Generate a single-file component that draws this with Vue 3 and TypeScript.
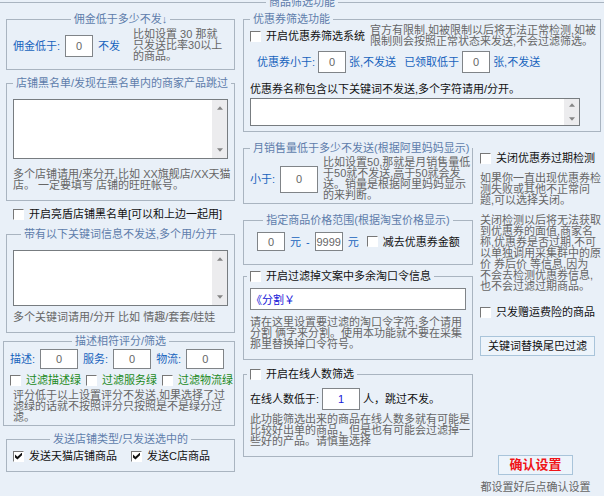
<script setup lang="ts">
import { reactive } from 'vue'

interface ScoreRule {
  key: string
  label: string
  filter: string
  value: string
  green: boolean
}

const form = reactive({
  commission: '0',
  shopBlacklist: '',
  useSharedBlacklist: false,
  keywords: '',
  sendTmall: true,
  sendCShop: true,
  couponEnabled: false,
  couponLeft: '0',
  couponTaken: '0',
  couponKeywords: '',
  monthlySales: '0',
  priceMin: '0',
  priceMax: '9999',
  subtractCoupon: false,
  filterTokens: false,
  tokens: '《分割￥',
  filterOnline: false,
  online: '1',
  skipExpiry: false,
  freightOnly: false,
})

const scores = reactive<ScoreRule[]>([
  { key: 'desc', label: '描述:', filter: '过滤描述绿', value: '0', green: false },
  { key: 'service', label: '服务:', filter: '过滤服务绿', value: '0', green: false },
  { key: 'logistics', label: '物流:', filter: '过滤物流绿', value: '0', green: false },
])
</script>

<template>
  <form @submit.prevent>
    <fieldset class="page">
      <legend>商品筛选功能</legend>
      <div class="columns">
        <div class="left">
          <fieldset class="group commission">
            <legend>佣金低于多少不发↓</legend>
            <div class="row">
              <label class="blue" for="commission">佣金低于:</label>
              <input id="commission" v-model="form.commission" class="num small tall" type="text" />
              <span class="blue">不发</span>
              <p class="note">比如设置 30 那就<br />只发送比率30以上<br />的商品。</p>
            </div>
          </fieldset>

          <fieldset class="group blacklist">
            <legend><label for="blacklist">店铺黑名单/发现在黑名单内的商家产品跳过</label></legend>
            <div class="area">
              <textarea id="blacklist" v-model="form.shopBlacklist"></textarea>
              <span class="scroll">
                <svg viewBox="0 0 7 4"><path d="M0 4 3.500 0 7 4z" /></svg>
                <svg viewBox="0 0 7 4"><path d="M0 0h7L3.500 4z" /></svg>
              </span>
            </div>
            <p class="note">多个店铺请用/来分开,比如 XX旗舰店/XX天猫<br />店。 一定要填写 店铺的旺旺帐号。</p>
          </fieldset>

          <label class="check shared">
            <input v-model="form.useSharedBlacklist" type="checkbox" />开启亮盾店铺黑名单[可以和上边一起用]
          </label>

          <fieldset class="group keywords">
            <legend><label for="keywords">带有以下关键词信息不发送,多个用/分开</label></legend>
            <div class="area">
              <textarea id="keywords" v-model="form.keywords"></textarea>
              <span class="scroll">
                <svg viewBox="0 0 7 4"><path d="M0 4 3.500 0 7 4z" /></svg>
                <svg viewBox="0 0 7 4"><path d="M0 0h7L3.500 4z" /></svg>
              </span>
            </div>
            <p class="note">多个关键词请用/分开 比如 情趣/套套/娃娃</p>
          </fieldset>

          <fieldset class="group scores">
            <legend>描述相符评分/筛选</legend>
            <div class="row spread">
              <span v-for="s in scores" :key="s.key" class="pair">
                <label class="blue" :for="s.key">{{ s.label }}</label>
                <input :id="s.key" v-model="s.value" class="num wide" type="text" />
              </span>
            </div>
            <div class="row spread filters">
              <label v-for="s in scores" :key="s.key" class="check green">
                <input v-model="s.green" type="checkbox" />{{ s.filter }}
              </label>
            </div>
            <p class="note">评分低于以上设置评分不发送,如果选择了过<br />滤绿的话就不按照评分只按照是不是绿分过<br />滤。</p>
          </fieldset>

          <fieldset class="group types">
            <legend>发送店铺类型/只发送选中的</legend>
            <div class="row">
              <label class="check"><input v-model="form.sendTmall" type="checkbox" />发送天猫店铺商品</label>
              <label class="check"><input v-model="form.sendCShop" type="checkbox" />发送C店商品</label>
            </div>
          </fieldset>
        </div>

        <div class="right">
          <fieldset class="group coupon">
            <legend class="start">优惠券筛选功能</legend>
            <div class="row">
              <label class="check"><input v-model="form.couponEnabled" type="checkbox" />开启优惠券筛选系统</label>
              <p class="note">官方有限制,如被限制以后将无法正常检测,如被<br />限制则会按照正常状态来发送,不会过滤筛选。</p>
            </div>
            <div class="row limits blue">
              <label for="coupon-left">优惠券小于:</label>
              <input id="coupon-left" v-model="form.couponLeft" class="num small tall" type="text" />
              <span class="unit">张,不发送</span>
              <label for="coupon-taken">已领取低于</label>
              <input id="coupon-taken" v-model="form.couponTaken" class="num small tall" type="text" />
              <span class="unit">张,不发送</span>
            </div>
            <label class="line" for="coupon-keywords">优惠券名称包含以下关键词不发送,多个字符请用/分开。</label>
            <div class="area">
              <textarea id="coupon-keywords" v-model="form.couponKeywords"></textarea>
              <span class="scroll">
                <svg viewBox="0 0 7 4"><path d="M0 4 3.500 0 7 4z" /></svg>
                <svg viewBox="0 0 7 4"><path d="M0 0h7L3.500 4z" /></svg>
              </span>
            </div>
          </fieldset>

          <div class="lower">
            <div class="middle">
              <fieldset class="group sales">
                <legend>月销售量低于多少不发送(根据阿里妈妈显示)</legend>
                <div class="row">
                  <label class="blue" for="sales">小于:</label>
                  <input id="sales" v-model="form.monthlySales" class="num wide high" type="text" />
                  <p class="note">比如设置50,那就是月销售量低<br />于50就不发送,高于50就会发<br />送。销量是根据阿里妈妈显示<br />的来判断。</p>
                </div>
              </fieldset>

              <fieldset class="group price">
                <legend>指定商品价格范围(根据淘宝价格显示)</legend>
                <div class="row blue">
                  <input v-model="form.priceMin" class="num small" type="text" aria-label="最低价格" />
                  <span>元</span>
                  <span class="dash">-</span>
                  <input v-model="form.priceMax" class="num small" type="text" aria-label="最高价格" />
                  <span>元</span>
                  <label class="check"><input v-model="form.subtractCoupon" type="checkbox" />减去优惠券金额</label>
                </div>
              </fieldset>

              <fieldset class="group tokens">
                <legend class="toggle">
                  <label class="check"><input v-model="form.filterTokens" type="checkbox" />开启过滤掉文案中多余淘口令信息</label>
                </legend>
                <input v-model="form.tokens" class="text" type="text" aria-label="淘口令字符" />
                <p class="note">请在这里设置要过滤的淘口令字符,多个请用<br />分割 俩字来分割。使用本功能就不要在采集<br />那里替换掉口令符号。</p>
              </fieldset>

              <fieldset class="group online">
                <legend class="toggle">
                  <label class="check"><input v-model="form.filterOnline" type="checkbox" />开启在线人数筛选</label>
                </legend>
                <div class="row">
                  <label for="online">在线人数低于:</label>
                  <input id="online" v-model="form.online" class="num wide tall active" type="text" />
                  <span>人，跳过不发。</span>
                </div>
                <p class="note">此功能筛选出来的商品在线人数多就有可能是<br />比较好出单的商品，但是也有可能会过滤掉一<br />些好的产品。请慎重选择</p>
              </fieldset>
            </div>

            <div class="side">
              <label class="check"><input v-model="form.skipExpiry" type="checkbox" />关闭优惠券过期检测</label>
              <p class="note">如果你一直出现优惠券检<br />测失败或其他不正常问<br />题,可以选择关闭。</p>
              <p class="note">关闭检测以后将无法获取<br />到优惠券的面值,商家名<br />称,优惠券是否过期,不可<br />以单独调用采集群中的原<br />价 券后价 等信息,因为<br />不会去检测优惠券信息,<br />也不会过滤过期商品。</p>
              <label class="check freight"><input v-model="form.freightOnly" type="checkbox" />只发赠运费险的商品</label>
              <button class="replace" type="button">关键词替换尾巴过滤</button>
              <div class="submit">
                <button class="confirm" type="submit">确认设置</button>
                <p class="note">都设置好后点确认设置</p>
              </div>
            </div>
          </div>
        </div>
      </div>
    </fieldset>
  </form>
</template>

<style>
html {
  background: #e9f0f8;
}
</style>

<style scoped>
form,
input,
textarea,
button {
  font-family: "Liberation Sans", "Noto Sans CJK SC", sans-serif;
  font-size: 11px;
}
form {
  line-height: 12px;
  color: #111;
  white-space: nowrap;
  overflow: hidden;
}
* {
  box-sizing: border-box;
}
p {
  margin: 0;
}
fieldset {
  min-width: 0;
  margin: 0;
  padding: 0;
  border: 0 solid #a9b4c0;
}
legend {
  margin: 0 auto;
  padding: 0 3px;
  color: #5e7dab;
}
.page {
  margin-top: -4px;
  border-top-width: 1px;
}
.columns {
  display: grid;
  grid-template-columns: minmax(0, 232fr) minmax(0, 358fr);
  gap: 8px;
  padding: 5px 3px 0 3px;
}
.left > * {
  margin-left: 3px;
}
.group {
  border-width: 1px;
  padding: 0 6px;
}
.start {
  margin-left: 0;
}
.toggle {
  margin-left: -3px;
}
.row,
.pair {
  display: flex;
  align-items: center;
  gap: 5px;
}
.spread {
  justify-content: space-between;
}
.note {
  color: #666;
  line-height: 11px;
}
.blue {
  color: #1763bd;
}
.line {
  display: block;
}
.check {
  display: flex;
  align-items: center;
  gap: 5px;
  color: #111;
}
.check.green {
  color: #1c8a22;
}
.check input {
  appearance: none;
  flex: none;
  width: 11px;
  height: 11px;
  margin: 0;
  background: #fff;
  border: 1px solid #fff;
  border-top-color: #777;
  border-left-color: #777;
}
.check input:checked::after {
  content: "";
  display: block;
  width: 7px;
  height: 7px;
  margin: 1px;
  background: #111;
  clip-path: polygon(0 30%, 35% 62%, 100% 0, 100% 38%, 35% 100%, 0 70%);
}
.num,
.text {
  height: 19px;
  padding: 0;
  background: #fff;
  border: 1px solid #808488;
  border-radius: 0;
  color: #666;
}
.num {
  flex: none;
  text-align: center;
}
.small {
  width: 28px;
}
.wide {
  width: 38px;
}
.tall {
  height: 22px;
}
.high {
  height: 27px;
}
.text {
  display: block;
  width: 100%;
  height: 22px;
  color: #1616d8;
}
.active {
  color: #1616d8;
}
.area {
  display: flex;
  background: #fff;
  border: 1px solid #777c80;
}
.area textarea {
  flex: 1;
  min-width: 0;
  height: 100%;
  padding: 2px;
  border: 0;
  background: none;
  resize: none;
}
.scroll {
  display: flex;
  flex-direction: column;
  justify-content: space-between;
  align-items: center;
  width: 15px;
  padding: 6px 0;
  background: #ececee;
}
.scroll svg {
  width: 6px;
  height: 4px;
  fill: #858585;
}

.commission .row {
  padding: 4px 0 7px;
}
.commission .note {
  margin-left: 8px;
}
.blacklist {
  margin-top: 7px;
  padding-bottom: 9px;
}
.blacklist .area {
  height: 60px;
  margin: 10px 0;
}
.shared {
  margin-top: 7px;
  padding: 0 7px;
}
.keywords {
  margin-top: 8px;
  padding-bottom: 9px;
}
.keywords .area {
  height: 56px;
  margin: 10px 0 6px;
}
.left > .scores {
  margin: 2px 0 0;
  padding: 2px 3px 2px 6px;
}
.scores .num {
  height: 20px;
}
.scores .spread {
  padding-right: 7px;
}
.scores .filters {
  margin: 5px 0 4px;
  padding: 0;
}
.scores .note {
  padding-left: 3px;
}
.types {
  margin-top: 7px;
}
.types .row {
  gap: 14px;
  padding: 5px 0 9px;
}

.coupon {
  padding-bottom: 5px;
}
.limits {
  gap: 3px;
  margin: 4px 0 10px;
  padding-left: 7px;
}
.unit {
  margin-right: 5px;
}
.coupon .area {
  height: 28px;
  margin: 3px 14px 0 0;
}
.coupon .scroll {
  padding: 4px 0;
}
.lower {
  display: grid;
  grid-template-columns: minmax(0, 230fr) minmax(0, 121fr);
  gap: 7px;
}
.middle {
  padding-top: 10px;
}
.sales .row {
  padding: 3px 0 2px;
}
.price {
  margin-top: 10px;
}
.price .row {
  padding: 6px 0 13px 7px;
}
.price .check {
  margin-left: 3px;
}
.tokens {
  margin-top: 5px;
  padding-bottom: 9px;
}
.tokens .text {
  margin: 6px 0 7px;
}
.online {
  margin-top: 8px;
  padding-bottom: 9px;
}
.online .row {
  padding: 8px 0 4px;
  gap: 3px;
}
.side {
  display: flex;
  flex-direction: column;
  align-items: flex-start;
  padding-top: 20px;
}
.side .note {
  margin-top: 9px;
}
.freight {
  margin-top: 14px;
}
button {
  height: 20px;
  padding: 0 16px;
  background: #edf4fb;
  border: 1px solid #a9c4da;
  color: #111;
  line-height: 12px;
}
.replace {
  align-self: stretch;
  margin: 18px 6px 0 0;
  padding: 0;
}
.submit {
  display: flex;
  flex-direction: column;
  align-items: center;
  align-self: stretch;
  margin-top: 99px;
  padding-right: 10px;
}
.confirm {
  padding: 0 10px;
  color: #f01418;
  font-size: 13px;
  font-weight: bold;
}
.submit .note {
  margin-top: 7px;
}
</style>
